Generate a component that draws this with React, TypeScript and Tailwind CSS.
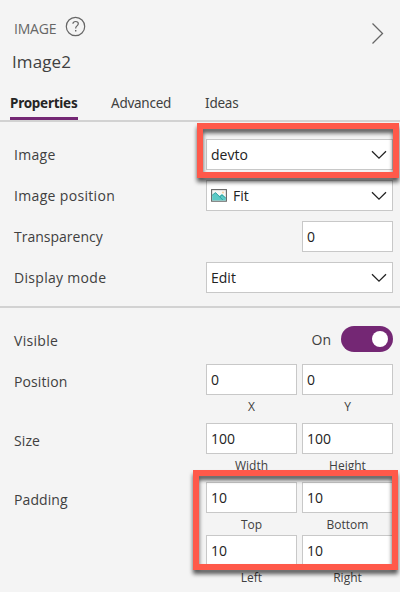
import type { ReactNode } from "react";

function Chevron() {
  return (
    <svg width="16" height="10" viewBox="0 0 16 10" fill="none" stroke="#222" strokeWidth="1.3" className="shrink-0">
      <path d="M1 1.2 8 8.2l7-7" />
    </svg>
  );
}

function PictureIcon() {
  return (
    <svg width="16" height="13" viewBox="0 0 16 13" className="mr-[6px] shrink-0">
      <rect x=".6" y=".6" width="14.8" height="11.6" fill="#f7f7f5" stroke="#666" strokeWidth="1.1" />
      <path d="M1.2 6.2 4.5 3.6l4 3.4 2.5-2 3.8 3.8v2.8H1.2z" fill="#5ccac6" />
      <path d="M1.2 6.2 4.5 3.6l7.3 7.4M9 7.6l2-1.7 3.8 3.2" fill="none" stroke="#2b9c9c" strokeWidth=".9" />
      <circle cx="12" cy="3.4" r="1" fill="#f5cfa0" />
    </svg>
  );
}

function Select({ children }: { children: ReactNode }) {
  return (
    <div className="flex h-[31px] w-[187px] items-center justify-between border border-[#c8c8c8] bg-white pr-[5px] pl-1 text-[#222]">
      <span className="flex items-center">{children}</span>
      <Chevron />
    </div>
  );
}

function NumberBox({ value }: { value: string }) {
  return (
    <div className="flex h-[31px] w-[91px] items-center border border-[#c8c8c8] bg-white pl-1 text-[#222]">{value}</div>
  );
}

function Row({ label, labelClass = "", children }: { label: string; labelClass?: string; children: ReactNode }) {
  return (
    <div className="flex h-[31px] items-center justify-between pr-[7px] pl-[14px]">
      <span className={`whitespace-nowrap ${labelClass}`}>{label}</span>
      {children}
    </div>
  );
}

function Captions({ left, right }: { left: string; right: string }) {
  return (
    <div className="flex justify-end gap-[5px] pr-[7px] text-[12px] leading-4">
      <span className="w-[91px] text-center">{left}</span>
      <span className="w-[91px] text-center">{right}</span>
    </div>
  );
}

function Pair({ label, values, captions }: { label: string; values: [string, string]; captions: [string, string] }) {
  return (
    <div className="flex flex-col gap-1">
      <Row label={label} labelClass="pt-[4px] tracking-[0.1px]">
        <div className="flex gap-[5px]">
          <NumberBox value={values[0]} />
          <NumberBox value={values[1]} />
        </div>
      </Row>
      <Captions left={captions[0]} right={captions[1]} />
    </div>
  );
}

export default function App() {
  return (
    <div className="relative flex h-[592px] w-[400px] flex-col overflow-hidden bg-[#f4f4f4] font-['Open_Sans','Noto_Sans',sans-serif] text-[14px] leading-5 text-[#404040]">
      <header className="flex h-[122px] shrink-0 flex-col border-b-2 border-[#d2d2d2]">
        <div className="flex h-[50px] items-start pt-[16px] pr-[16px] pl-[14px]">
          <span className="mt-[3px] w-[51px] tracking-[-0.2px] text-[#666]">IMAGE</span>
          <svg width="21" height="21" viewBox="0 0 21 21" fill="none" stroke="#666" strokeWidth="1.2">
            <circle cx="10.5" cy="10.5" r="9.2" />
            <path d="M7.9 7.8c.1-1.4 1.2-2.3 2.8-2.3 1.5 0 2.6.9 2.6 2.2 0 2.1-2.6 2.2-2.6 4.3v.6" />
            <path d="M10.7 14.1v1.5" strokeWidth="1.4" />
          </svg>
          <svg width="13" height="22" viewBox="0 0 13 22" fill="none" stroke="#666" strokeWidth="1.3" className="mt-[6px] ml-auto">
            <path d="M1.5 1.5 11.5 11.5l-10 10" />
          </svg>
        </div>
        <h1 className="pl-[12px] text-[17px] leading-6 tracking-[0.1px]">Image2</h1>
        <nav className="mt-auto flex h-[28px] items-start pl-[10px] font-['Noto_Sans','Open_Sans',sans-serif] text-[13.5px] tracking-[-0.25px]">
          <span className="h-[28px] w-[68px] border-b-[3px] border-[#742774] pt-px font-bold text-[#252525]">Properties</span>
          <span className="ml-[33px] pt-px">Advanced</span>
          <span className="ml-[34px] pt-px">Ideas</span>
        </nav>
      </header>

      <section className="flex h-[186px] shrink-0 flex-col gap-[10px] border-b-2 border-[#d2d2d2] pt-[17px]">
        <Row label="Image" labelClass="pt-px tracking-[0.3px]">
          <Select>devto</Select>
        </Row>
        <Row label="Image position" labelClass="pt-px tracking-[0.33px]">
          <Select>
            <PictureIcon />
            Fit
          </Select>
        </Row>
        <Row label="Transparency" labelClass="pt-px">
          <NumberBox value="0" />
        </Row>
        <Row label="Display mode" labelClass="pt-px tracking-[0.3px]">
          <Select>Edit</Select>
        </Row>
      </section>

      <section className="flex flex-col pt-[15px]">
        <Row label="Visible" labelClass="pt-[4px] tracking-[0.3px]">
          <div className="flex items-center gap-[10px]">
            <span className="pt-[2px]">On</span>
            <div className="flex h-[26px] w-[52px] items-center justify-end rounded-full bg-[#742774] pr-[5px]">
              <span className="h-4 w-4 rounded-full bg-white" />
            </div>
          </div>
        </Row>
        <div className="mt-[10px] flex flex-col gap-2">
          <Pair label="Position" values={["0", "0"]} captions={["X", "Y"]} />
          <Pair label="Size" values={["100", "100"]} captions={["Width", "Height"]} />
          <div className="flex flex-col gap-[2px]">
            <Pair label="Padding" values={["10", "10"]} captions={["Top", "Bottom"]} />
            <Pair label="" values={["10", "10"]} captions={["Left", "Right"]} />
          </div>
        </div>
      </section>

      <div className="absolute top-[123px] left-[197px] h-[55px] w-[202px] border-6 border-[#ff594a] drop-shadow-[0_4px_2px_rgba(0,0,0,0.65)]" />
      <div className="absolute top-[470px] left-[193px] h-[100px] w-[205px] border-6 border-[#ff594a] drop-shadow-[0_4px_2px_rgba(0,0,0,0.65)]" />
    </div>
  );
}
